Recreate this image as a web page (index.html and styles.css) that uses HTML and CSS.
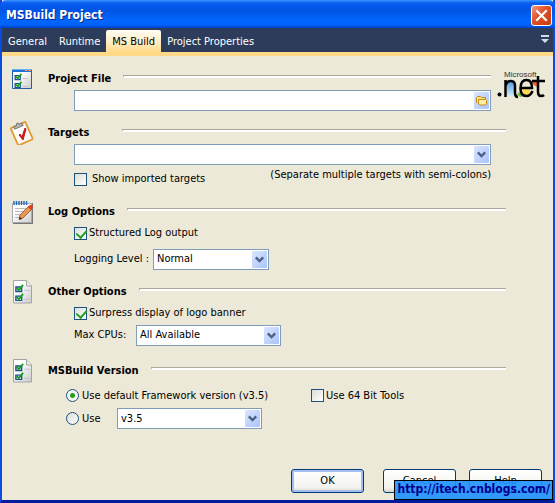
FILE: index.html
```html
<!DOCTYPE html>
<html lang="en">
<head>
<meta charset="utf-8">
<title>MSBuild Project</title>
<link rel="stylesheet" href="styles.css">
</head>
<body>
<svg class="defs" aria-hidden="true">
  <defs>
    <linearGradient id="btn" x2="1" y2="1"><stop stop-color="#dbe6ff"/><stop offset="1" stop-color="#a9c3fa"/></linearGradient>
    <linearGradient id="sheet" x2="1" y2="1"><stop offset=".3" stop-color="#fff"/><stop offset="1" stop-color="#ccc"/></linearGradient>
    <symbol id="arrow" viewBox="0 0 15 17">
      <rect width="15" height="17" rx="1" fill="url(#btn)"/>
      <path d="M3.8 6.3 7.5 10l3.700-3.700" fill="none" stroke="#4d6185" stroke-width="2.400"/>
    </symbol>
    <symbol id="checks" viewBox="0 0 13 15">
      <path d="M.7 2.700h5v4h-5zM.7 10.700h5v4h-5z" fill="#fff" stroke="#1c4f8c" stroke-width="1.300"/>
      <path d="M1.500 3.500 3.200 5.500 7 .8M1.500 11.500l1.700 2L7 8.800" fill="none" stroke="#14a01c" stroke-width="1.700"/>
      <path d="M8 5.500h5M8 13.500h5" stroke="#c4c4c4"/>
    </symbol>
    <symbol id="page" viewBox="0 0 20 24">
      <path d="M.5.500h13l5 5.500v17H.5z" fill="url(#sheet)" stroke="#a3a3a3"/>
      <path d="M13.500.500V6h5" fill="#eee" stroke="#a3a3a3"/>
      <use href="#checks" x="2" y="4" width="15" height="17"/>
    </symbol>
  </defs>
</svg>
<div class="window">
  <header class="titlebar">
    <h1>MSBuild Project</h1>
    <button class="close" type="button" aria-label="Close">
      <svg viewBox="0 0 19 19"><path d="m5 5 9 9m0-9-9 9" stroke="#fff" stroke-width="2.200" stroke-linecap="square"/></svg>
    </button>
  </header>
  <nav class="tabs">
    <a href="#general">General</a>
    <a href="#runtime">Runtime</a>
    <a href="#msbuild" class="active" aria-current="page">MS Build</a>
    <a href="#properties">Project Properties</a>
    <button class="more" type="button" aria-label="More tabs">
      <svg viewBox="0 0 8 8"><path d="M0 0h8v2H0zM0 4h8L4 8z" fill="#d5dbe6"/></svg>
    </button>
  </nav>
  <form class="body">
    <section class="project">
      <svg class="icon" viewBox="0 0 24 24">
        <path d="M2.500 3.500h19v18h-19z" fill="url(#sheet)" stroke="#2a5ca8"/>
        <path d="M2 2h20v3H2z" fill="#1f72d0"/><path d="M2 2h20v1H2z" fill="#69b2f5"/>
        <path d="M15 3h2v1h-2zM18 3h3v1h-3z" fill="#ff9a62"/>
        <use href="#checks" x="4" y="6" width="14" height="15"/>
      </svg>
      <div class="group">
        <div class="head"><h2><label for="file">Project File</label></h2><hr></div>
        <div class="row wide">
          <div class="field">
            <input id="file" type="text">
            <button class="browse" type="button" aria-label="Browse">
              <svg viewBox="0 0 15 17"><rect width="15" height="17" rx="1" fill="url(#btn)"/><path d="M2.500 11V5.500l1-1h3l1 1h4V8" fill="#ffe58a" stroke="#c48a13"/><path d="M4.500 7.500h7l1 1V12l-1 1h-6l-1-1z" fill="#fff0a2" stroke="#c48a13"/></svg>
            </button>
          </div>
        </div>
      </div>
      <svg class="logo" viewBox="0 0 50 30" role="img" aria-label="Microsoft .net">
        <defs><linearGradient id="sky" x2="0" y2="1"><stop stop-color="#3f95dd"/><stop offset="1" stop-color="#d4ecfa"/></linearGradient></defs>
        <path d="M10 12q5-4 8 1v13h-8z" fill="url(#sky)"/>
        <path d="M20 24q5-5 9 2l-6 1z" fill="#78b83d"/>
        <path d="M25 17h8v7l-7 1z" fill="#ffd84d"/>
        <path d="M34 11h7v6q-5-1-7-6z" fill="#ef6530"/>
        <circle cx="2.500" cy="24.500" r="2" fill="#000"/>
        <path d="M8.500 27V10M8.500 16q1-5 5.500-5 4 0 4 5v7q0 4 3 4M24 18h11q0-8-5.500-8-6 0-6 8.500 0 7.500 6 7.500 4 0 6-5M35 11h13M41 6v16q0 4 3 4 2 0 3-1" fill="none" stroke="#000" stroke-width="2.500"/>
        <text x="7" y="7">Microsoft</text>
      </svg>
    </section>

    <section class="targets">
      <svg class="icon" viewBox="0 0 24 24">
        <g transform="rotate(-24 12 12)">
          <rect x="3.500" y="3" width="16" height="19" rx="1" fill="#f7f5f6" stroke="#e39a2d" stroke-width="1.800"/>
          <path d="M5 5h13v3L6 19H5z" fill="#fff"/>
          <path d="M7 5.500V3h3q1.500-4 3 0h3v2.500z" fill="#bbb" stroke="#777"/>
        </g>
        <path d="m9 14 1-1 2 3 3-9 1 1-3 11z" fill="#c81919" stroke="#c81919"/>
      </svg>
      <div class="group">
        <div class="head"><h2><label for="targets">Targets</label></h2><hr></div>
        <div class="row wide">
          <div class="field"><select id="targets"><option></option></select><svg class="arrow"><use href="#arrow"/></svg></div>
        </div>
        <div class="row wide hint">
          <input id="imported" type="checkbox"><label for="imported">Show imported targets</label>
          <p>(Separate multiple targets with semi-colons)</p>
        </div>
      </div>
    </section>

    <section class="log">
      <svg class="icon" viewBox="0 0 24 24">
        <path d="M3 3h20v21H3z" fill="#777"/>
        <path d="M2.500 3.500h19v19h-19z" fill="url(#sheet)" stroke="#aaa"/>
        <path d="M4 1v4M6.500 1v4M9 1v4M11.500 1v4M14 1v4M16.500 1v4" stroke="#2364b5" stroke-width="1.400"/>
        <path d="M5 8.500h11M5 11.500h9M5 14.500h7M5 17.500h5" stroke="#bbb"/>
        <path d="m9 19 1-4L19 6l3 3-9 9z" fill="#e99851" stroke="#8a4e22" stroke-width=".8"/>
        <path d="m18 7 2-2h2l1 2-2 3z" fill="#df3b22"/><path d="m9 20 1-3 2 2z" fill="#222"/>
      </svg>
      <div class="group">
        <div class="head"><h2>Log Options</h2><hr></div>
        <div class="row">
          <input id="structured" type="checkbox" checked><label for="structured">Structured Log output</label>
        </div>
        <div class="row level">
          <label for="level">Logging Level :</label>
          <div class="field small"><select id="level"><option>Normal</option></select><svg class="arrow"><use href="#arrow"/></svg></div>
        </div>
      </div>
    </section>

    <section class="other">
      <svg class="icon" viewBox="0 0 24 24"><use href="#page" x="3" width="20" height="24"/></svg>
      <div class="group">
        <div class="head"><h2>Other Options</h2><hr></div>
        <div class="row">
          <input id="banner" type="checkbox" checked><label for="banner">Surpress display of logo banner</label>
        </div>
        <div class="row cpus">
          <label for="cpus">Max CPUs:</label>
          <div class="field medium"><select id="cpus"><option>All Available</option></select><svg class="arrow"><use href="#arrow"/></svg></div>
        </div>
      </div>
    </section>

    <section class="version">
      <svg class="icon" viewBox="0 0 24 24"><use href="#page" x="3" width="20" height="24"/></svg>
      <div class="group">
        <div class="head"><h2>MSBuild Version</h2><hr></div>
        <div class="choices">
          <div class="row">
            <input id="default" type="radio" name="framework" checked><label for="default">Use default Framework version (v3.5)</label>
          </div>
          <div class="row">
            <input id="bits" type="checkbox"><label for="bits">Use 64 Bit Tools</label>
          </div>
          <div class="row use">
            <input id="use" type="radio" name="framework"><label for="use">Use</label>
            <div class="field medium"><select aria-label="Framework version"><option>v3.5</option></select><svg class="arrow"><use href="#arrow"/></svg></div>
          </div>
        </div>
      </div>
    </section>

    <footer>
      <button class="push primary" type="button">OK</button>
      <button class="push" type="button">Cancel</button>
      <button class="push" type="button">Help</button>
    </footer>
  </form>
  <a class="watermark" href="http://itech.cnblogs.com/">http://itech.cnblogs.com/</a>
</div>
</body>
</html>
```
FILE: styles.css
```css
* { box-sizing: border-box; }

body {
  margin: 0;
  background: #ece9d8;
  color: #000;
  font: 11px/14px "DejaVu Sans Condensed", "DejaVu Sans", sans-serif;
}

h1, h2, p { margin: 0; }
a { color: inherit; text-decoration: none; }
button, input, select { font: inherit; color: inherit; margin: 0; }
svg { display: block; flex: none; }
.defs { position: absolute; width: 0; height: 0; }

.window {
  position: relative;
  display: flex;
  flex-direction: column;
  min-height: 100vh;
  border: solid #0a4be0;
  border-width: 0 2px 3px;
  border-bottom-color: #001c9c;
}

.titlebar {
  display: flex;
  align-items: center;
  justify-content: space-between;
  height: 28px;
  margin: 0 -2px;
  padding: 2px 3px 0 6px;
  border-radius: 6px 6px 0 0;
  background: linear-gradient(#3b93ff 0, #0a5df0 3px, #0054e3 10px, #0066ff 21px, #0062f8 25px, #0040c8);
}
.titlebar h1 {
  color: #fff;
  font-size: 12px;
  line-height: 18px;
  text-shadow: 1px 1px #0a2a8c;
}
.close {
  width: 21px;
  height: 21px;
  padding: 0;
  border: 1px solid #fff;
  border-radius: 3px;
  background: linear-gradient(135deg, #f0977c, #e04f25 45%, #c93a10);
}

.tabs {
  display: flex;
  align-items: flex-end;
  height: 28px;
  border-bottom: 4px solid #ffd987;
  background: #2d3c5a;
  color: #fff;
}
.tabs a { padding: 5px 6px 3px; }
.tabs .active {
  border-radius: 2px 2px 0 0;
  background: linear-gradient(#fffcf4, #fff0c9 50%, #ffd987);
  color: #000;
}
.more {
  width: 8px;
  height: 8px;
  margin: 0 4px 9px auto;
  padding: 0;
  border: 0;
  background: none;
}

.body {
  display: flex;
  flex: 1;
  flex-direction: column;
  padding: 11px 6px 7px 8px;
}
section { display: flex; }
.icon { width: 24px; height: 24px; margin-right: 14px; }
.group { flex: 1; min-width: 0; margin-right: 41px; }
.project .group { margin-right: 56px; }
.head { display: flex; align-items: center; height: 22px; }
.head h2 {
  min-width: 62px;
  margin-right: 12px;
  padding-top: 2px;
  font-size: 11px;
  white-space: nowrap;
}
hr {
  flex: 1;
  height: 3px;
  margin: 0 0 4px;
  border: solid #aca899;
  border-width: 1px 0 0 1px;
  border-bottom: 2px solid #fff;
}

.row {
  display: flex;
  align-items: center;
  min-height: 22px;
  padding-left: 26px;
  white-space: nowrap;
}
.wide { margin-right: 15px; }
.project .wide { margin-right: 0; }
.project { padding-bottom: 10px; }
.logo { width: 50px; height: 30px; margin: 3px 0 0 -50px; }
.logo text { font: 8px "Liberation Sans", sans-serif; fill: #333; }
.hint { height: 28px; margin-bottom: 7px; }
.hint p { margin: 0 0 8px auto; }
.level { height: 30px; margin-bottom: 6px; }
.cpus { margin-bottom: 13px; }

.field {
  display: flex;
  align-items: center;
  flex: 1;
  height: 21px;
  border: 1px solid #7f9db9;
  background: #fff;
}
.field input, .field select {
  flex: 1;
  min-width: 0;
  width: 100%;
  height: 19px;
  padding: 0 20px 0 3px;
  border: 0;
  outline: 0;
  appearance: none;
  background: none;
}
.field .arrow, .browse {
  width: 15px;
  height: 17px;
  margin: 0 1px 0 -16px;
  padding: 0;
  border: 0;
  pointer-events: none;
}
.browse { pointer-events: auto; background: none; }
.small { flex: 0 0 116px; }
.medium { flex: 0 0 145px; }
.level > label { width: 79px; }
.cpus > label { width: 62px; }

input[type="checkbox"], input[type="radio"] {
  flex: none;
  width: 13px;
  height: 13px;
  margin-right: 2px;
  border: 1px solid #1c5180;
  appearance: none;
  background: linear-gradient(135deg, #dcdcd7, #fff);
}
.hint input { margin-right: 5px; }
input[type="checkbox"]:checked::before {
  display: block;
  width: 5px;
  height: 8px;
  margin: 0 0 0 3px;
  border: solid #21a121;
  border-width: 0 2px 2px 0;
  content: "";
  transform: rotate(42deg);
}
input[type="radio"] { margin-right: 3px; border-radius: 50%; }
input[type="radio"]:checked {
  background: radial-gradient(circle, #21a121 0 2px, #f4f4f1 3px);
}

.choices {
  display: grid;
  grid-template-columns: 245px 1fr;
  padding: 3px 0 0 18px;
}
.choices .row { min-height: 23px; padding: 0; }
.use label { width: 35px; }

footer {
  display: flex;
  justify-content: flex-end;
  gap: 13px;
  margin-top: auto;
  padding-right: 5px;
}
.push {
  width: 73px;
  height: 24px;
  padding: 0;
  border: 1px solid #003c74;
  border-radius: 3px;
  background: linear-gradient(#fff, #f3f3ef 80%, #d8d2c6);
}
.primary {
  margin-right: 6px;
  box-shadow: inset 0 0 0 2px #a3bff0;
}

.watermark {
  position: absolute;
  right: 0;
  bottom: 0;
  padding: 1px 2px 2px;
  border: 1px solid #000;
  background: rgba(30, 144, 255, .9);
  color: #00008b;
  font-weight: bold;
  font-size: 12px;
  line-height: 15px;
}
```
